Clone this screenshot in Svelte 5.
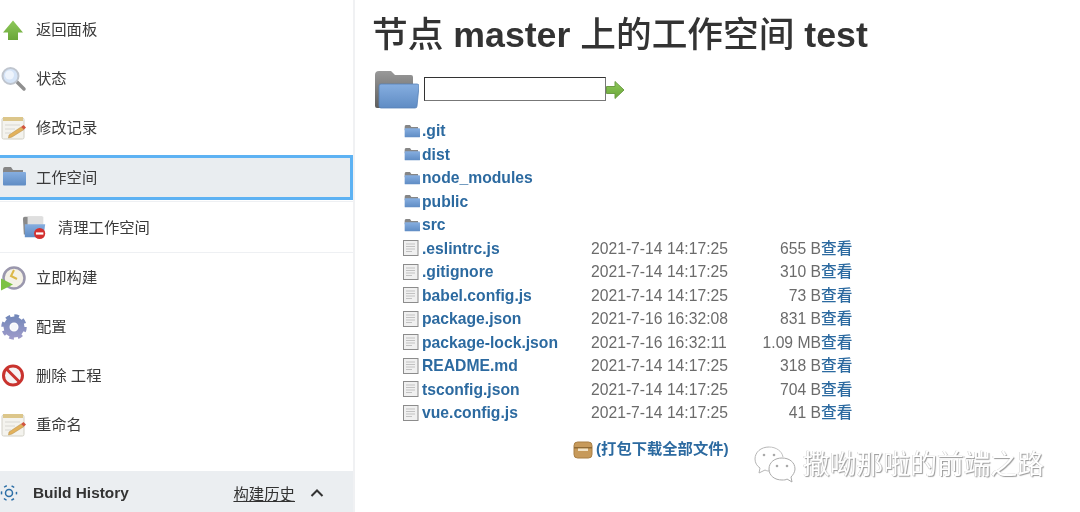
<script lang="ts">
  const nav = [
    { icon: 'up', label: '返回面板' },
    { icon: 'search', label: '状态' },
    { icon: 'note', label: '修改记录' },
    { icon: 'folder', label: '工作空间', active: true },
    { icon: 'wipe', label: '清理工作空间', sub: true },
    { icon: 'clock', label: '立即构建' },
    { icon: 'gear', label: '配置' },
    { icon: 'stop', label: '删除 工程' },
    { icon: 'note', label: '重命名' }
  ];

  const dirs = ['.git', 'dist', 'node_modules', 'public', 'src'];

  const files = [
    { name: '.eslintrc.js', date: '2021-7-14 14:17:25', size: '655 B' },
    { name: '.gitignore', date: '2021-7-14 14:17:25', size: '310 B' },
    { name: 'babel.config.js', date: '2021-7-14 14:17:25', size: '73 B' },
    { name: 'package.json', date: '2021-7-16 16:32:08', size: '831 B' },
    { name: 'package-lock.json', date: '2021-7-16 16:32:11', size: '1.09 MB' },
    { name: 'README.md', date: '2021-7-14 14:17:25', size: '318 B' },
    { name: 'tsconfig.json', date: '2021-7-14 14:17:25', size: '704 B' },
    { name: 'vue.config.js', date: '2021-7-14 14:17:25', size: '41 B' }
  ];
</script>

{#snippet flatFolder(w, h)}
  <svg width={w} height={h} viewBox="0 0 24 20">
    <path d="M1 4 Q1 1 3 1 H9 L11 4 H21 V9 H1 Z" fill="#868686" />
    <rect x="1" y="6" width="23" height="13.500" rx="1" fill="url(#blue)" />
  </svg>
{/snippet}

{#snippet noteIcon()}
  <svg width="26" height="26" viewBox="0 0 26 26">
    <rect x="1" y="3" width="22" height="21" rx="1.500" fill="#f4f3ee" stroke="#d2d0c6" />
    <rect x="2" y="2" width="20" height="4" fill="#dcc68a" />
    <path d="M4 10 H19 M4 14 H14 M4 18 H10" stroke="#d8d8d2" stroke-width="1.200" />
    <path d="M8 20 L20 12 L23 14.500 L11 22 L7.500 23 Z" fill="#e3b25c" stroke="#b08a45" stroke-width="0.500" />
    <path d="M20 12 L23 14.500 L25 12.500 L22.500 10 Z" fill="#d2553f" />
  </svg>
{/snippet}

{#snippet navIcon(name)}
  {#if name === 'up'}
    <svg width="26" height="26" viewBox="0 0 26 26">
      <path d="M12 3.500 L22 15.500 H17 V23 H7 V15.500 H2 Z" fill="url(#green)" />
    </svg>
  {:else if name === 'search'}
    <svg width="26" height="26" viewBox="0 0 26 26">
      <path d="M15 15 L23 23" stroke="#8f8f8f" stroke-width="3.500" stroke-linecap="round" />
      <circle cx="9.500" cy="10" r="8" fill="#d5e4f7" stroke="#bfc5ce" stroke-width="2" />
      <circle cx="8.500" cy="9" r="4.500" fill="#eef4fc" />
    </svg>
  {:else if name === 'note'}
    {@render noteIcon()}
  {:else if name === 'folder'}
    {@render flatFolder(24, 22)}
  {:else if name === 'wipe'}
    <svg width="28" height="28" viewBox="0 0 28 28">
      <path d="M1 5 Q1 3 3 3 H22 V22 H2 Z" fill="#8a8a8a" />
      <path d="M6 3 H23 V12 H6 Z" fill="#dfdfdf" />
      <path d="M3 11 H25 L23 25 H3 Z" fill="url(#blue)" />
      <circle cx="19" cy="21" r="6" fill="#d3302f" />
      <rect x="15" y="19.800" width="8" height="2.400" fill="#fff" />
    </svg>
  {:else if name === 'clock'}
    <svg width="26" height="26" viewBox="0 0 26 26">
      <circle cx="13" cy="13" r="10.500" fill="#f4f1e6" stroke="#9a97ad" stroke-width="2.500" />
      <path d="M13 5 L10 11 L16 14" fill="none" stroke="#dcb848" stroke-width="2" />
      <path d="M-1 13 L12 19.500 L-1 26 Z" fill="#7cc243" />
    </svg>
  {:else if name === 'gear'}
    <svg width="26" height="26" viewBox="0 0 26 26">
      <circle cx="13" cy="13" r="7.500" fill="none" stroke="url(#steel)" stroke-width="6" />
      <circle cx="13" cy="13" r="11" fill="none" stroke="url(#steel)" stroke-width="3.500" stroke-dasharray="4.600 4.040" />
      <circle cx="13" cy="13" r="3.500" fill="#f4f6fb" />
    </svg>
  {:else if name === 'stop'}
    <svg width="26" height="26" viewBox="0 0 26 26">
      <circle cx="12" cy="12.500" r="9.500" fill="#f6f3f3" stroke="#c9332e" stroke-width="3" />
      <path d="M5.500 6 L18.500 19" stroke="#c9332e" stroke-width="3" />
    </svg>
  {/if}
{/snippet}

{#snippet fileIcon()}
  <svg width="16" height="16" viewBox="0 0 16 16">
    <rect x="0.500" y="0.500" width="14.500" height="15" fill="#f0f0f0" stroke="#8c8c8c" />
    <path d="M3 4 H12 M3 6.500 H12 M3 9 H12 M3 11.500 H9" stroke="#c2c2c2" />
  </svg>
{/snippet}

<div class="page">
  <svg class="defs" width="0" height="0">
    <defs>
      <linearGradient id="blue" x1="0" y1="0" x2="0" y2="1">
        <stop offset="0" stop-color="#86aee0" />
        <stop offset="1" stop-color="#5f8cc4" />
      </linearGradient>
      <linearGradient id="green" x1="0" y1="0" x2="0" y2="1">
        <stop offset="0" stop-color="#8ec95a" />
        <stop offset="1" stop-color="#6aa638" />
      </linearGradient>
      <linearGradient id="steel" gradientUnits="userSpaceOnUse" x1="0" y1="0" x2="0" y2="26">
        <stop offset="0" stop-color="#6f86b8" />
        <stop offset="1" stop-color="#a19ccb" />
      </linearGradient>
      <linearGradient id="grey" x1="0" y1="0" x2="0" y2="1">
        <stop offset="0" stop-color="#999" />
        <stop offset="1" stop-color="#5e5e5e" />
      </linearGradient>
    </defs>
  </svg>

  <aside class="sidebar">
    <nav class="tasks">
      {#each nav as item}
        <div class="task" class:active={item.active} class:sub={item.sub}>
          <span class="task-icon">{@render navIcon(item.icon)}</span>
          <span class="task-label">{item.label}</span>
        </div>
      {/each}
    </nav>
    <div class="history">
      <svg width="18" height="18" viewBox="0 0 18 18">
        <circle cx="9" cy="9" r="3.500" fill="none" stroke="#2b6ea6" stroke-width="1.500" />
        <circle cx="9" cy="9" r="7.500" fill="none" stroke="#2b6ea6" stroke-width="1.500" stroke-dasharray="3 4.850" stroke-dashoffset="1.500" />
      </svg>
      <strong>Build History</strong>
      <u>构建历史</u>
      <svg class="caret" width="14" height="10" viewBox="0 0 14 10">
        <path d="M1.500 8 L7 2.500 L12.500 8" fill="none" stroke="#333" stroke-width="2" />
      </svg>
    </div>
  </aside>

  <main class="main">
    <h1>节点 <b>master</b> 上的工作空间 <b>test</b></h1>
    <div class="path">
      <svg width="45" height="41" viewBox="0 0 45 41">
        <path d="M1 5 Q1 1 5 1 H17 L21 5 H37 Q39 5 39 7 V38 H3 Q1 38 1 36 Z" fill="url(#grey)" />
        <path d="M7 14 H43 Q45 14 45 16 L43 36 Q43 38 41 38 H7 Q5 38 5 36 V16 Q5 14 7 14 Z" fill="url(#blue)" stroke="#5580b6" stroke-width="0.800" />
      </svg>
      <div class="path-input"></div>
      <svg width="19" height="20" viewBox="0 0 19 20">
        <path d="M0.500 6.500 H9 V1.500 L18 10 L9 18.500 V13.500 H0.500 Z" fill="url(#green)" stroke="#6c9c45" />
      </svg>
    </div>

    <div class="files">
      {#each dirs as dir}
        <div class="row">
          <span class="ico dir">{@render flatFolder(16, 14)}</span>
          <a href="#top">{dir}</a>
        </div>
      {/each}
      {#each files as file}
        <div class="row">
          <span class="ico">{@render fileIcon()}</span>
          <a href="#top">{file.name}</a>
          <span class="date">{file.date}</span>
          <span class="size">{file.size}</span>
          <a class="view" href="#top">查看</a>
        </div>
      {/each}
    </div>

    <div class="zip">
      <svg width="20" height="18" viewBox="0 0 20 18">
        <rect x="1" y="1" width="18" height="16" rx="3.500" fill="#c79a5b" stroke="#a97f45" />
        <rect x="1" y="6" width="18" height="1.500" fill="#8f6a35" />
        <rect x="5" y="7.500" width="10" height="2.500" fill="#f1e3c8" />
      </svg>
      <a href="#top">(打包下载全部文件)</a>
    </div>
  </main>

  <div class="watermark">
    <svg width="42" height="38" viewBox="0 0 42 38">
      <path d="M15 1 C7 1 1 6 1 13 C1 17 3 20 6 22 L5 27 L11 24 C13 25 14 25 16 25" fill="#fff" stroke="#b5b5b5" />
      <path d="M41 23 C41 16 35 12 28 12 C21 12 15 16 15 23 C15 30 21 34 28 34 C30 34 32 34 33 33 L38 36 L37 31 C39 29 41 26 41 23 Z" fill="#fff" stroke="#aaa" />
      <path d="M29 11 C28 5 22 1 15 1" fill="none" stroke="#c0c0c0" />
      <circle cx="10" cy="9" r="1.300" fill="#aaa" /><circle cx="20" cy="9" r="1.300" fill="#aaa" />
      <circle cx="23" cy="20" r="1.300" fill="#aaa" /><circle cx="33" cy="20" r="1.300" fill="#aaa" />
    </svg>
    <span>撒呦那啦的前端之路</span>
  </div>
</div>

<style>
  :global(body) {
    margin: 0;
    background: #fff;
  }

  .page {
    position: relative;
    display: flex;
    width: 1080px;
    height: 512px;
    overflow: hidden;
    font-family: 'Liberation Sans', 'Noto Sans CJK SC', sans-serif;
    color: #333;
    filter: blur(0.35px);
  }

  .defs {
    position: absolute;
  }

  .sidebar {
    display: flex;
    flex-direction: column;
    justify-content: space-between;
    width: 353px;
    height: 512px;
    flex: none;
    border-right: 2px solid #f0f1f3;
  }

  .tasks {
    display: flex;
    flex-direction: column;
    padding-top: 5px;
  }

  .task {
    display: flex;
    align-items: center;
    gap: 9px;
    height: 49px;
    padding-left: 1px;
    box-sizing: border-box;
    font-size: 15.300px;
    color: #3a3a3a;
  }

  .task-icon {
    display: flex;
    width: 26px;
    justify-content: center;
  }

  .task-label {
    margin-top: -3px;
  }

  .task.active {
    height: 45px;
    margin: 3px 0 1px;
    background: #e9edf0;
    border: 3px solid #5db2f3;
    border-left: 0;
  }

  .task.active .task-icon {
    margin-top: -4px;
  }

  .task.sub {
    height: 52px;
    padding-left: 22px;
    border-top: 1px solid #eef0f3;
    border-bottom: 1px solid #eef0f3;
    gap: 10px;
  }

  .history {
    display: flex;
    align-items: center;
    height: 41px;
    box-sizing: border-box;
    background: #ebeef1;
    font-size: 15.400px;
    padding: 3px 29px 0 0;
  }

  .history svg:first-child {
    margin-right: 15px;
  }

  .history u {
    margin-left: auto;
    color: #333;
  }

  .caret {
    margin-left: 15px;
  }

  .main {
    flex: 1;
    padding-left: 17px;
  }

  h1 {
    margin: 12px 0 0;
    font-size: 35.700px;
    line-height: 46px;
    font-weight: 500;
    color: #333;
  }

  .path {
    display: flex;
    align-items: center;
    margin: 8px 0 0 2px;
    height: 48px;
  }

  .path-input {
    width: 180px;
    height: 22px;
    margin: 0 0 3px 5px;
    background: #fff;
    border: 1px solid #333;
    border-color: #333 #777 #777 #333;
  }

  .files {
    margin-top: 5px;
    padding-left: 31px;
  }

  .row {
    display: flex;
    height: 23.500px;
    line-height: 23.500px;
    font-size: 15.700px;
    color: #6b6b6b;
  }

  .ico {
    display: flex;
    align-items: center;
    width: 19px;
    flex: none;
  }

  .ico.dir {
    padding-left: 1px;
    width: 18px;
  }

  a {
    color: #2c6aa0;
    font-weight: 700;
    text-decoration: none;
  }

  .row a.view {
    font-weight: 500;
  }

  .row a:nth-child(2) {
    width: 169px;
    flex: none;
  }

  .date {
    width: 150px;
    flex: none;
  }

  .size {
    width: 80px;
    flex: none;
    text-align: right;
  }

  .zip {
    display: flex;
    align-items: center;
    gap: 3px;
    margin: 16px 0 0 201px;
    font-size: 15.300px;
  }

  .zip a {
    margin-top: -5px;
  }

  .watermark {
    position: absolute;
    left: 754px;
    top: 444px;
    display: flex;
    align-items: center;
    gap: 7px;
  }

  .watermark span {
    padding-top: 1px;
    font-size: 26.800px;
    line-height: 40px;
    color: #fff;
    text-shadow: 1px 1px 1px #999, -0.5px -0.5px 0 #ccc;
    white-space: nowrap;
  }
</style>
